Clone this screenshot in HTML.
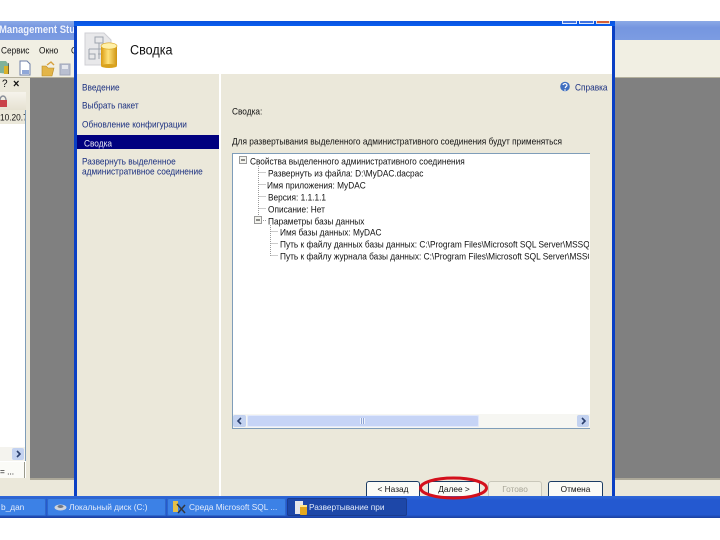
<!DOCTYPE html>
<html lang="ru">
<head>
<meta charset="utf-8">
<style>
html,body{margin:0;padding:0;background:#fff;}
#p{position:relative;width:720px;height:540px;overflow:hidden;background:#fff;font-family:"Liberation Sans",sans-serif;font-size:8.3px;color:#111;}
#p div,#p span.t{position:absolute;}
.t{white-space:nowrap;line-height:12px;transform:scaleY(1.12);}
.n{color:#1a2f80;}
.btn{box-sizing:border-box;height:15px;background:#fbfbf7;border:1px solid #1c3c64;border-bottom:none;border-radius:3px 3px 0 0;text-align:center;line-height:15px;font-size:8.3px;color:#111;}
.tb{box-sizing:border-box;top:498px;height:18px;color:#e4ecfb;font-size:8.3px;line-height:19px;white-space:nowrap;background:#3c81e6;border-radius:2px;box-shadow:inset 0 0 0 1px #2f67c9;overflow:hidden;}
</style>
</head>
<body>
<div id="p">
  <!-- background window -->
  <div style="left:0;top:21px;width:720px;height:19px;background:linear-gradient(#8ba9e6,#7596e0 35%,#7c9ce2);"></div>
  <div class="t" style="left:-1px;top:25px;color:#eef2fc;font-weight:bold;font-size:9.5px;">Management Stud</div>
  <div style="left:0;top:40px;width:720px;height:38px;background:#f1efe3;"></div>
  <div class="t" style="left:1px;top:44px;">Сервис</div>
  <div class="t" style="left:39px;top:44px;">Окно</div>
  <div class="t" style="left:71px;top:44px;">С</div>
  <!-- toolbar icons -->
  <svg style="position:absolute;left:0;top:58px" width="74" height="20" viewBox="0 0 74 20">
    <path d="M0 3h6l3 4v9l-9-1z" fill="#7fb29a"/><path d="M4 8h5v8H4z" fill="#d9b22a"/>
    <path d="M8 5h1v11H8z" fill="#333" opacity=".6"/>
    <path d="M20 3h7l3 3v11H20z" fill="#fff" stroke="#6d7fa8"/><path d="M22 12h7v4h-7z" fill="#8fa7d8"/>
    <path d="M42 8h4l2 2h6l-2 8H42z" fill="#e3b548" stroke="#b98a25" stroke-width=".6"/><path d="M47 7l4-3 3 3" fill="none" stroke="#d7a03c" stroke-width="1.4"/>
    <rect x="60" y="6" width="10" height="11" fill="#b9bfd0" stroke="#9fa6b8"/><rect x="62" y="7" width="6" height="4" fill="#e6e8ee"/>
  </svg>
  <div style="left:0;top:77px;width:720px;height:1px;background:#b4b09c;"></div>
  <!-- grey mdi -->
  <div style="left:30px;top:78px;width:45px;height:400px;background:#808080;"></div>
  <div style="left:615px;top:78px;width:105px;height:400px;background:#808080;"></div>
  <div style="left:26px;top:78px;width:4px;height:400px;background:#ebe8da;"></div>
  <div style="left:0;top:478px;width:720px;height:18px;background:#ebe8da;"></div>
  <div style="left:30px;top:478px;width:690px;height:2px;background:#aca899;"></div>
  <!-- left pane -->
  <div style="left:0;top:78px;width:26px;height:14px;background:#ebe8da;"></div>
  <div class="t" style="left:2px;top:79px;font-size:10px;">?</div>
  <div class="t" style="left:13px;top:78px;font-size:11px;font-weight:bold;">×</div>
  <div style="left:0;top:92px;width:26px;height:18px;background:linear-gradient(#f6f4ec,#e6e2d2);"></div>
  <svg style="position:absolute;left:0;top:92px" width="12" height="18" viewBox="0 0 12 18"><path d="M0 8a3 4 0 0 1 6 0" fill="none" stroke="#8a8f9a" stroke-width="1.4"/><rect x="0" y="8" width="7" height="7" fill="#c9424a"/></svg>
  <div style="left:0;top:110px;width:25px;height:337px;background:#fff;border-right:1px solid #7f9db9;"></div>
  <div style="left:0;top:110px;width:25px;height:14px;background:#ebe8da;overflow:hidden;"><span class="t" style="left:0;top:1px;">10.20.7</span></div>
  <div style="left:0;top:447px;width:25px;height:14px;background:#f4f3ee;border-right:1px solid #7f9db9;"></div>
  <div style="left:12px;top:448px;width:12px;height:12px;background:#c3d2f0;border-radius:2px;"></div>
  <svg style="position:absolute;left:12px;top:448px" width="12" height="12"><path d="M5 3l3 3-3 3" fill="none" stroke="#2a3f6e" stroke-width="1.6"/></svg>
  <div style="left:0;top:462px;width:24px;height:16px;background:#fbfbf7;border-right:1px solid #9a9a8c;"></div>
  <div class="t" style="left:0;top:465px;">= ...</div>

  <!-- dialog frame -->
  <div style="left:74px;top:21px;width:541px;height:475px;background:#0a3fc4;"></div>
  <div style="left:74px;top:21px;width:541px;height:5px;background:linear-gradient(#0a52dd,#0a5ff0);"></div>
  <div style="left:562px;top:21px;width:15px;height:3px;background:#3f73e0;border:1px solid #dfe8fb;border-top:none;box-sizing:border-box;"></div>
  <div style="left:579px;top:21px;width:15px;height:3px;background:#3f73e0;border:1px solid #dfe8fb;border-top:none;box-sizing:border-box;"></div>
  <div style="left:596px;top:21px;width:14px;height:3px;background:#d4603a;border:1px solid #e8e0d8;border-top:none;box-sizing:border-box;"></div>
  <!-- header -->
  <div style="left:77px;top:26px;width:535px;height:48px;background:#fff;"></div>
  <svg style="position:absolute;left:84px;top:31px" width="36" height="38" viewBox="0 0 36 38">
    <defs><linearGradient id="g" x1="0" x2="1" y1="0" y2="0"><stop offset="0" stop-color="#d99a10"/><stop offset=".45" stop-color="#ffe27a"/><stop offset="1" stop-color="#cf9410"/></linearGradient></defs>
    <path d="M1 2h19l7 7v25H1z" fill="#e8e8ea" stroke="#cfcfd4"/>
    <path d="M11 6h8v6h-8zM15 12v6M5 18h20M5 18v5M5 23h6v5H5zM15 18v10M14 23h6" fill="none" stroke="#9ea4ad"/>
    <rect x="17" y="14" width="16" height="21" rx="1" fill="url(#g)"/>
    <ellipse cx="25" cy="15" rx="8" ry="3.2" fill="#fff0a8" stroke="#d9a21c" stroke-width=".6"/>
    <ellipse cx="25" cy="35" rx="8" ry="2" fill="#d9a21c"/>
  </svg>
  <div class="t" style="left:130px;top:44px;font-size:12.6px;">Сводка</div>
  <!-- left nav -->
  <div style="left:77px;top:74px;width:142px;height:422px;background:#ebe8da;"></div>
  <div style="left:219px;top:74px;width:2px;height:422px;background:#fff;"></div>
  <div class="t n" style="left:82px;top:81px;">Введение</div>
  <div class="t n" style="left:82px;top:99px;">Выбрать пакет</div>
  <div class="t n" style="left:82px;top:118px;">Обновление конфигурации</div>
  <div style="left:77px;top:135px;width:142px;height:14px;background:#00007f;"></div>
  <div class="t" style="left:84px;top:137px;color:#e8e8f4;">Сводка</div>
  <div class="t n" style="left:82px;top:155px;">Развернуть выделенное</div>
  <div class="t n" style="left:82px;top:165px;">административное соединение</div>
  <!-- right -->
  <div style="left:221px;top:74px;width:391px;height:422px;background:#ebe8da;"></div>
  <svg style="position:absolute;left:560px;top:81px" width="10" height="11" viewBox="0 0 10 11"><circle cx="5" cy="5.5" r="4.8" fill="#3f6fc0"/><path d="M3 4a2 1.6 0 1 1 3 1.6L5 7" fill="none" stroke="#fff" stroke-width="1.2"/><circle cx="5" cy="9" r=".8" fill="#fff"/></svg>
  <div class="t n" style="left:575px;top:81px;">Справка</div>
  <div class="t" style="left:232px;top:105px;">Сводка:</div>
  <div class="t" style="left:232px;top:135px;">Для развертывания выделенного административного соединения будут применяться</div>
  <!-- tree -->
  <div style="left:232px;top:153px;width:358px;height:276px;box-sizing:border-box;background:#fff;border:1px solid #7f9db9;border-right:none;border-bottom:1px solid #7f9db9;overflow:hidden;"></div>
  <svg style="position:absolute;left:232px;top:153px" width="60" height="112" viewBox="0 0 60 112">
    <g fill="none" stroke="#9a9a9a" stroke-dasharray="1 1">
      <path d="M26.500 13V63M26.500 19.500h8M26.500 31.500h8M26.500 43.500h8M26.500 55.500h8M29 67.500h6"/>
      <path d="M38.500 72V103M38.500 78.500h7M38.500 90.500h7M38.500 102.500h7"/>
    </g>
    <rect x="7.500" y="3.500" width="7" height="7" fill="#f4f4ee" stroke="#9a9a9a"/><path d="M9 7h4" stroke="#222"/>
    <rect x="22.500" y="63.500" width="7" height="7" fill="#f4f4ee" stroke="#9a9a9a"/><path d="M24 67h4" stroke="#222"/>
  </svg>
  <div class="t" style="left:250px;top:155px;">Свойства выделенного административного соединения</div>
  <div class="t" style="left:268px;top:167px;">Развернуть из файла: D:\MyDAC.dacpac</div>
  <div class="t" style="left:267px;top:179px;">Имя приложения: MyDAC</div>
  <div class="t" style="left:268px;top:191px;">Версия: 1.1.1.1</div>
  <div class="t" style="left:268px;top:203px;">Описание: Нет</div>
  <div class="t" style="left:268px;top:215px;">Параметры базы данных</div>
  <div class="t" style="left:280px;top:226px;">Имя базы данных: MyDAC</div>
  <div style="left:276px;top:236px;width:313px;height:27px;overflow:hidden;">
    <span class="t" style="left:4px;top:2px;">Путь к файлу данных базы данных: C:\Program Files\Microsoft SQL Server\MSSQL1</span>
    <span class="t" style="left:4px;top:14px;">Путь к файлу журнала базы данных: C:\Program Files\Microsoft SQL Server\MSSQL1</span>
  </div>
  <!-- hscroll -->
  <div style="left:233px;top:414px;width:357px;height:14px;background:#f6f6f2;"></div>
  <div style="left:233px;top:415px;width:13px;height:12px;background:#c3d2f0;border-radius:2px;"></div>
  <svg style="position:absolute;left:233px;top:415px" width="13" height="12"><path d="M8 3L5 6l3 3" fill="none" stroke="#2a3f6e" stroke-width="1.6"/></svg>
  <div style="left:247px;top:415px;width:232px;height:12px;background:#c6d4f6;border-radius:2px;box-shadow:inset 0 0 0 1px #e2e9fb;"></div>
  <div style="left:360px;top:418px;width:5px;height:6px;background:repeating-linear-gradient(90deg,#eef2fc 0 1px,#8fa5d6 1px 2px);"></div>
  <div style="left:577px;top:415px;width:12px;height:12px;background:#c3d2f0;border-radius:2px;"></div>
  <svg style="position:absolute;left:577px;top:415px" width="12" height="12"><path d="M5 3l3 3-3 3" fill="none" stroke="#2a3f6e" stroke-width="1.6"/></svg>
  <!-- buttons -->
  <div class="btn" style="left:366px;top:481px;width:54px;">&lt; Назад</div>
  <div class="btn" style="left:428px;top:481px;width:52px;">Далее &gt;</div>
  <div class="btn" style="left:488px;top:481px;width:54px;border-color:#c9c7ba;background:#f0eee2;color:#a8a698;">Готово</div>
  <div class="btn" style="left:548px;top:481px;width:55px;">Отмена</div>
  <!-- taskbar -->
  <div style="left:0;top:496px;width:720px;height:22px;background:linear-gradient(#2f68d8,#2459d0 20%,#2459d0 85%,#1a3f9e);"></div>
  <div class="tb" style="left:-4px;width:50px;padding-left:5px;">b_дan</div>
  <div class="tb" style="left:47px;width:119px;padding-left:22px;">Локальный диск (C:)</div>
  <svg style="position:absolute;left:54px;top:503px" width="13" height="9"><ellipse cx="6.500" cy="4.500" rx="6" ry="3" fill="#cfd4dc"/><ellipse cx="6.500" cy="3.500" rx="3" ry="1.500" fill="#6f7784"/></svg>
  <div class="tb" style="left:167px;width:119px;padding-left:22px;">Среда Microsoft SQL ...</div>
  <svg style="position:absolute;left:173px;top:500px" width="13" height="14"><rect x="0" y="1" width="5" height="11" fill="#e3c04a"/><path d="M4 4l8 9M12 5l-7 8" stroke="#33373f" stroke-width="1.500"/></svg>
  <div class="tb" style="left:287px;width:120px;padding-left:22px;background:#1d47a8;box-shadow:inset 0 0 0 1px #1a3c90;">Развертывание при</div>
  <svg style="position:absolute;left:295px;top:501px" width="13" height="14"><path d="M0 0h8v13H0z" fill="#e6e6ea"/><rect x="5" y="4" width="7" height="10" rx="1" fill="#e3a81f"/><rect x="5" y="4" width="7" height="2" fill="#ffe68c"/></svg>
  <!-- red ellipse -->
  <svg style="position:absolute;left:416px;top:473px" width="76" height="30" viewBox="0 0 76 30"><ellipse cx="37.500" cy="15" rx="33" ry="10" fill="none" stroke="#d4101c" stroke-width="3"/></svg>
</div>
</body>
</html>
